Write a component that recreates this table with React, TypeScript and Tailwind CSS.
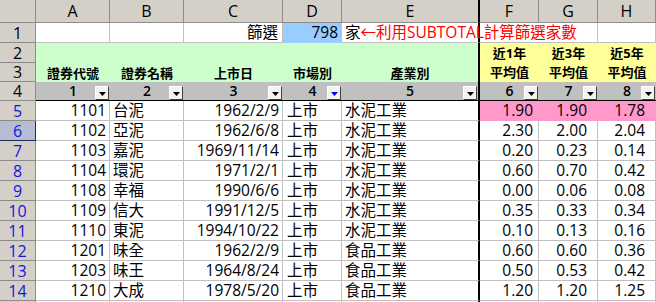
import React from 'react';

type Row = [string, string, string, string, string, string, string, string];

const rows: Row[] = [
  ['1101', '台泥', '1962/2/9', '上市', '水泥工業', '1.90', '1.90', '1.78'],
  ['1102', '亞泥', '1962/6/8', '上市', '水泥工業', '2.30', '2.00', '2.04'],
  ['1103', '嘉泥', '1969/11/14', '上市', '水泥工業', '0.20', '0.23', '0.14'],
  ['1104', '環泥', '1971/2/1', '上市', '水泥工業', '0.60', '0.70', '0.42'],
  ['1108', '幸福', '1990/6/6', '上市', '水泥工業', '0.00', '0.06', '0.08'],
  ['1109', '信大', '1991/12/5', '上市', '水泥工業', '0.35', '0.33', '0.34'],
  ['1110', '東泥', '1994/10/22', '上市', '水泥工業', '0.10', '0.13', '0.16'],
  ['1201', '味全', '1962/2/9', '上市', '食品工業', '0.60', '0.60', '0.36'],
  ['1203', '味王', '1964/8/24', '上市', '食品工業', '0.50', '0.53', '0.42'],
  ['1210', '大成', '1978/5/20', '上市', '食品工業', '1.20', '1.20', '1.25'],
];

const dataCls = [
  'justify-end pr-[3px] border-r border-b border-[#c0c0c0]',
  'justify-start pl-[3px] border-r border-b border-[#c0c0c0]',
  'justify-end pr-[3px] border-r border-b border-[#c0c0c0]',
  'justify-start pl-[4px] border-r border-b border-[#c0c0c0]',
  'justify-start pl-[3px] border-b border-b-[#c0c0c0] border-r-2 border-r-black',
  'justify-end pr-[5px] border-r border-b border-[#c0c0c0]',
  'justify-end pr-[10px] border-r border-b border-[#c0c0c0]',
  'justify-end pr-[10px] border-r border-b border-[#c0c0c0]',
];

const pinkCls = [
  'justify-end pr-[5px] border-r border-b border-[#ff99cc] bg-[#ff99cc]',
  'justify-end pr-[10px] border-r border-b border-[#ff99cc] bg-[#ff99cc]',
  'justify-end pr-[10px] border-r border-b border-[#ff99cc] bg-[#ff99cc]',
];

function ColHead({ label, freeze }: { label: string; freeze?: boolean }) {
  return (
    <div
      className={
        freeze
          ? 'bg-[#d4d0c8] flex items-center justify-center text-[16px] leading-none text-black border-b border-b-[#8c8c8c] border-r-2 border-r-black'
          : 'bg-[#d4d0c8] flex items-center justify-center text-[16px] leading-none text-black border-r border-b border-[#8c8c8c]'
      }
    >
      {label}
    </div>
  );
}

function RowHead({ n, blue, selected }: { n: number; blue?: boolean; selected?: boolean }) {
  let cls = 'bg-[#d4d0c8] flex items-center justify-center text-[16px] leading-none border-r border-b border-[#8c8c8c] text-black';
  if (blue) cls = 'bg-[#d4d0c8] flex items-center justify-center text-[16px] leading-none border-r border-b border-[#8c8c8c] text-[#1515e0]';
  if (selected) cls = 'bg-[#b6bdd2] flex items-center justify-center text-[16px] leading-none border-r border-b border-[#242c5c] text-[#1515e0]';
  return <div className={cls}>{n}</div>;
}

function DropBtn({ active }: { active?: boolean }) {
  return (
    <div className="absolute right-[1px] top-[4px] w-[14px] h-[14px] bg-[#f4f3ee] border border-t-white border-l-white border-r-[#404040] border-b-[#404040] flex items-end justify-center pb-[3px]">
      <svg width="7" height="4" viewBox="0 0 7 4">
        <path d="M0 0H7L3.5 4Z" fill={active ? '#0000ff' : '#000000'} />
      </svg>
    </div>
  );
}

function FilterCell({ n, active, freeze }: { n: number; active?: boolean; freeze?: boolean }) {
  return (
    <div
      className={
        freeze
          ? 'relative bg-[#c0c0c0] flex items-center justify-center text-[14px] leading-none font-semibold border-b border-b-black border-r-2 border-r-black'
          : 'relative bg-[#c0c0c0] flex items-center justify-center text-[14px] leading-none font-semibold border-b border-b-black'
      }
    >
      <span className="leading-none">{n}</span>
      <DropBtn active={active} />
    </div>
  );
}

export default function App() {
  return (
    <div className="w-[656px] h-[302px] overflow-hidden bg-white text-black font-['Open_Sans','Noto_Sans_CJK_TC',sans-serif]">
      <div className="grid grid-cols-[36px_74px_74px_99px_59px_138px_59px_59px_58px] grid-rows-[23px_20px_20px_19px_19px_repeat(11,20px)]">
        {/* header row */}
        <div className="bg-[#d4d0c8] border-r border-b border-[#8c8c8c]" />
        <ColHead label="A" />
        <ColHead label="B" />
        <ColHead label="C" />
        <ColHead label="D" />
        <ColHead label="E" freeze />
        <ColHead label="F" />
        <ColHead label="G" />
        <ColHead label="H" />

        {/* row 1 */}
        <RowHead n={1} />
        <div className="border-r border-b border-[#c0c0c0]" />
        <div className="border-r border-b border-[#c0c0c0]" />
        <div className="flex items-center justify-end pr-[4px] text-[15.5px] leading-none border-r border-b border-[#c0c0c0]">篩選</div>
        <div className="flex items-center justify-end pr-[3px] text-[15.5px] leading-none bg-[#99ccff] border-r border-b border-[#99ccff]">798</div>
        <div className="flex items-center justify-start pl-[3px] text-[15.5px] leading-none whitespace-nowrap border-b border-b-[#c0c0c0] border-r-2 border-r-black">
          <span className="relative z-10">
            家<span className="text-[#ff0000]">←利用SUBTOTAL計算篩選家數</span>
          </span>
        </div>
        <div className="border-b border-[#c0c0c0]" />
        <div className="border-r border-b border-[#c0c0c0]" />
        <div className="border-r border-b border-[#c0c0c0]" />

        {/* rows 2-3 */}
        <RowHead n={2} />
        <div className="col-span-5 row-span-2 grid grid-cols-[74px_74px_99px_59px_136px] grid-rows-[20px_19px] bg-[#ccffcc] border-r-2 border-r-black text-[13px] leading-none font-bold">
          <div />
          <div />
          <div />
          <div />
          <div />
          <div className="flex items-center justify-center pt-[1px]">證券代號</div>
          <div className="flex items-center justify-center pt-[1px]">證券名稱</div>
          <div className="flex items-center justify-center pt-[1px]">上市日</div>
          <div className="flex items-center justify-center pt-[1px]">市場別</div>
          <div className="flex items-center justify-center pt-[1px]">產業別</div>
        </div>
        <div className="col-span-3 row-span-2 grid grid-cols-[59px_59px_58px] grid-rows-[20px_19px] bg-[#ffff99] text-[13px] leading-none font-bold">
          <div className="flex items-center justify-center pt-[1px]">近1年</div>
          <div className="flex items-center justify-center pt-[1px]">近3年</div>
          <div className="flex items-center justify-center pt-[1px]">近5年</div>
          <div className="flex items-center justify-center">平均值</div>
          <div className="flex items-center justify-center">平均值</div>
          <div className="flex items-center justify-center">平均值</div>
        </div>
        <RowHead n={3} />

        {/* row 4 */}
        <RowHead n={4} />
        <FilterCell n={1} />
        <FilterCell n={2} />
        <FilterCell n={3} />
        <FilterCell n={4} active />
        <FilterCell n={5} freeze />
        <FilterCell n={6} />
        <FilterCell n={7} />
        <FilterCell n={8} />

        {/* data rows */}
        {rows.map((r, i) => (
          <React.Fragment key={i}>
            <RowHead n={i + 5} blue selected={i === 1} />
            {r.map((v, j) => (
              <div
                key={j}
                className={
                  'flex items-center whitespace-nowrap text-[15.5px] leading-none ' +
                  (i === 0 && j >= 5 ? pinkCls[j - 5] : dataCls[j])
                }
              >
                {v}
              </div>
            ))}
          </React.Fragment>
        ))}

        {/* partial row 15 */}
        <div className="bg-[#d4d0c8] border-r border-b border-[#8c8c8c]" />
        {dataCls.map((c, j) => (
          <div key={j} className={'flex ' + c} />
        ))}
      </div>
    </div>
  );
}
